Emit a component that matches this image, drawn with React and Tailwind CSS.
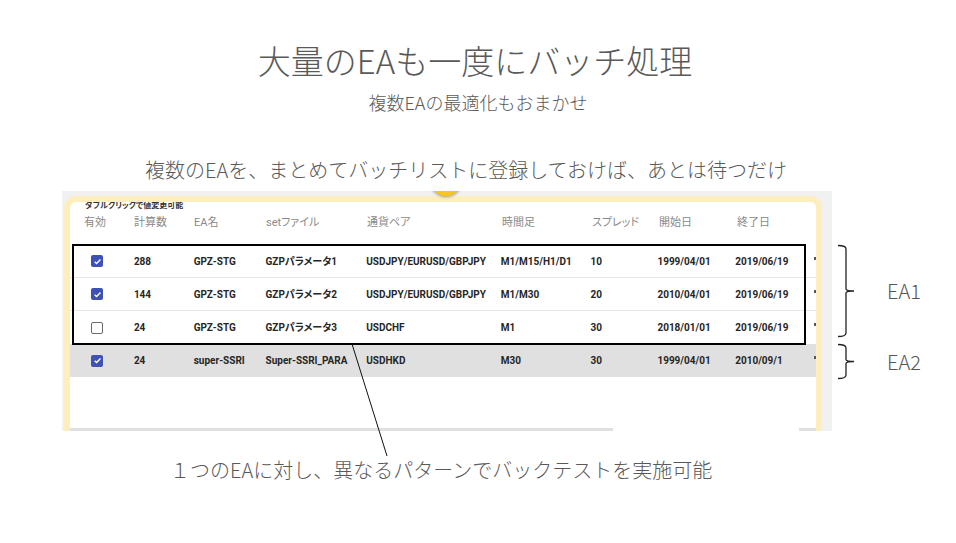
import React from 'react';

const ROWS = [
    { on: true, n: '288', ea: 'GPZ-STG', set: 'GZPパラメータ1', pair: 'USDJPY/EURUSD/GBPJPY', tf: 'M1/M15/H1/D1', sp: '10', from: '1999/04/01', to: '2019/06/19' },
    { on: true, n: '144', ea: 'GPZ-STG', set: 'GZPパラメータ2', pair: 'USDJPY/EURUSD/GBPJPY', tf: 'M1/M30', sp: '20', from: '2010/04/01', to: '2019/06/19' },
    { on: false, n: '24', ea: 'GPZ-STG', set: 'GZPパラメータ3', pair: 'USDCHF', tf: 'M1', sp: '30', from: '2018/01/01', to: '2019/06/19' },
];

const LAST = { on: true, n: '24', ea: 'super-SSRI', set: 'Super-SSRI_PARA', pair: 'USDHKD', tf: 'M30', sp: '30', from: '1999/04/01', to: '2010/09/1' };

const HEAD = ['計算数', 'EA名', 'setファイル', '通貨ペア', '時間足', 'スプレッド', '開始日', '終了日'];
const WIDTHS = ['w-[60px]', 'w-[72px]', 'w-[101px]', 'w-[135px]', 'w-[90px]', 'w-[67px]', 'w-[78px]', 'w-[76px]'];

const slide = { fontFamily: '"Noto Sans CJK JP", "Liberation Sans", sans-serif' };
const ui = { fontFamily: 'Roboto, "Noto Sans CJK JP", sans-serif' };

const Check = ({ on }) =>
    on ? (
        <span className="w-[12px] h-[12px] rounded-[2px] bg-[#3f51b5] flex items-center justify-center">
            <svg width="9" height="9" viewBox="0 0 10 10">
                <path d="M1.8 5.2 L4 7.3 L8.3 2.8" fill="none" stroke="#fff" strokeWidth="1.5" />
            </svg>
        </span>
    ) : (
        <span className="w-[12px] h-[12px] rounded-[2px] border-[1.5px] border-[#6b6b6b] bg-white" />
    );

const Row = ({ r, className }) => {
    const cells = [r.n, r.ea, r.set, r.pair, r.tf, r.sp, r.from, r.to];
    return (
        <div className={`h-[33px] flex items-center pl-[14px] text-[10px] font-bold text-[#262626] whitespace-nowrap ${className}`}>
            <div className="w-[50px] pl-[7px] flex">
                <Check on={r.on} />
            </div>
            {cells.map((c, i) => (
                <div key={i} className={WIDTHS[i]}>{c}</div>
            ))}
            <div className="ml-[3px] mt-[-6px] w-[2px] h-[3px] bg-[#555]" />
        </div>
    );
};

const Bracket = ({ h }) => (
    <svg width="22" height={h + 2} viewBox={`0 0 22 ${h + 2}`} className="shrink-0">
        <path
            d={`M2 1.5 Q10 1.5 10 5 L10 ${h / 2 - 1} Q10 ${h / 2 + 1} 18 ${h / 2 + 1} Q10 ${h / 2 + 1} 10 ${h / 2 + 3} L10 ${h - 3} Q10 ${h + 0.5} 2 ${h + 0.5}`}
            fill="none"
            stroke="#222"
            strokeWidth="1.3"
        />
    </svg>
);

export default function App() {
    return (
        <div className="w-[956px] h-[543px] bg-white relative overflow-hidden text-[#595959]" style={slide}>
            <h1 className="mt-[39px] text-center text-[33px] leading-[42px] font-light pr-[6px]">大量のEAも一度にバッチ処理</h1>
            <p className="mt-[9px] text-center text-[18px] leading-[24px] font-light">複数EAの最適化もおまかせ</p>
            <p className="mt-[42px] text-center text-[20px] leading-[28px] pr-[24px] font-light">複数のEAを、まとめてバッチリストに登録しておけば、あとは待つだけ</p>

            <div className="mt-[7px] ml-[62px] flex">
                {/* screenshot of batch list */}
                <div className="w-[770px] h-[240px] bg-[#f1f1f1] pl-[2px] pr-[10px] pt-[5px] relative overflow-hidden [font-feature-settings:'palt']" style={ui}>
                    <div className="absolute left-[368px] top-[-27px] w-[32px] h-[32px] rounded-full bg-[#f7c51e] shadow-[0_1px_3px_rgba(0,0,0,0.35)]" />
                    <div className="h-full rounded-t-[12px] border-[6px] border-b-0 border-[#fdeebd] bg-white overflow-hidden flex flex-col">
                        <div className="pl-[15px] text-[8px] leading-[9px] font-bold text-[#333] mt-[-1px]">ダブルクリックで値変更可能</div>
                        <div className="h-[35px] pt-[6px] pl-[14px] flex text-[11px] leading-[14px] text-[#8a8a8a] whitespace-nowrap">
                            <div className="w-[50px]">有効</div>
                            {HEAD.map((h, i) => (
                                <div key={i} className={WIDTHS[i]}>{h}</div>
                            ))}
                        </div>
                        <div className="relative">
                            {ROWS.map((r, i) => (
                                <Row key={i} r={r} className={i < 2 ? 'border-b border-[#e6e6e6]' : ''} />
                            ))}
                            <div className="absolute left-[2px] top-[-1px] w-[734px] h-[101px] border-2 border-black" />
                        </div>
                        <Row r={LAST} className="bg-[#e0e0e0]" />
                        <div className="flex-1" />
                        <div className="h-[3px] flex">
                            <div className="w-[543px] bg-[#e0e0e0]" />
                            <div className="flex-1" />
                            <div className="w-[17px] bg-[#e0e0e0]" />
                        </div>
                    </div>
                </div>

                {/* EA brackets */}
                <div className="flex flex-col ml-[4px]">
                    <div className="mt-[53px] h-[94px] flex items-center">
                        <Bracket h={92} />
                        <span className="ml-[29px] text-[20px] leading-[24px] text-[#555] font-light">EA1</span>
                    </div>
                    <div className="mt-[5px] h-[37px] flex items-center">
                        <Bracket h={35} />
                        <span className="ml-[29px] text-[20px] leading-[24px] text-[#555] font-light">EA2</span>
                    </div>
                </div>
            </div>

            <p className="mt-[25px] pl-[170px] text-[20px] leading-[28px] font-light">１つのEAに対し、異なるパターンでバックテストを実施可能</p>

            <svg className="absolute left-0 top-0 pointer-events-none" width="956" height="543">
                <line x1="352" y1="344" x2="387" y2="456" stroke="#111" strokeWidth="1" />
            </svg>
        </div>
    );
}
